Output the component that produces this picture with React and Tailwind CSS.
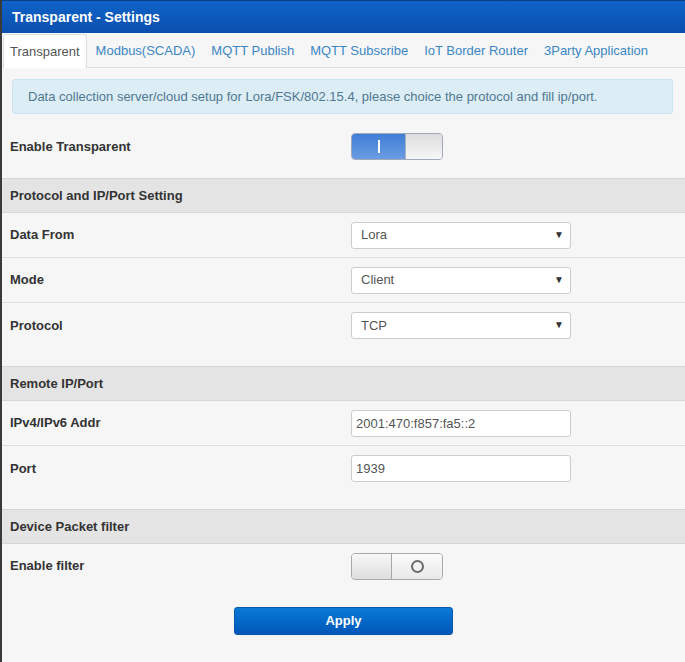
import React, { useState } from "react";

const tabs = [
  "Transparent",
  "Modbus(SCADA)",
  "MQTT Publish",
  "MQTT Subscribe",
  "IoT Border Router",
  "3Party Application",
];

const Toggle = ({ on, onClick }) => {
  if (on) {
    return (
      <button
        onClick={onClick}
        className="flex h-[27px] w-[92px] overflow-hidden rounded-[4px] border border-[#9fa9b8]"
      >
        <span className="flex h-full w-[53px] items-center justify-center bg-gradient-to-b from-[#3f7ed6] to-[#6a9ce3]">
          <span className="h-[13px] w-[2px] bg-white" />
        </span>
        <span className="h-full flex-1 border-l border-[#aab2bd] bg-gradient-to-b from-[#dcdcdc] to-[#f7f7f7]" />
      </button>
    );
  }
  return (
    <button
      onClick={onClick}
      className="flex h-[27px] w-[92px] overflow-hidden rounded-[4px] border border-[#a9a9a9]"
    >
      <span className="h-full w-[40px] border-r border-[#a9a9a9] bg-gradient-to-b from-[#f7f7f7] to-[#dedede]" />
      <span className="flex h-full flex-1 items-center justify-center bg-gradient-to-b from-[#fbfbfb] to-[#e9e9e9]">
        <span className="h-[13px] w-[13px] rounded-full border-2 border-[#6b6b6b]" />
      </span>
    </button>
  );
};

const Select = ({ value, options }) => (
  <div className="relative h-[27px] w-[220px]">
    <select
      defaultValue={value}
      className="h-full w-full appearance-none rounded-[3px] border border-[#cccccc] bg-white pl-[9px] text-[13px] text-[#555] outline-none"
    >
      {options.map((o) => (
        <option key={o}>{o}</option>
      ))}
    </select>
    <span className="pointer-events-none absolute right-[7px] top-[6px] text-[10px] leading-[14px] text-[#333]">
      ▼
    </span>
  </div>
);

const Input = ({ value }) => (
  <input
    defaultValue={value}
    className="h-[27px] w-[220px] rounded-[3px] border border-[#cccccc] bg-white px-[4px] text-[13px] text-[#555] outline-none"
  />
);

const Row = ({ label, children, border = true }) => (
  <div
    className={
      "flex h-[45px] items-center" + (border ? " border-b border-[#dddddd]" : "")
    }
  >
    <div className="w-[349px] pl-[8px] text-[13px] font-bold text-[#333]">
      {label}
    </div>
    {children}
  </div>
);

const Section = ({ title }) => (
  <div className="flex h-[35px] items-center border-y border-[#d6d6d6] bg-[#e4e4e4] pl-[8px] text-[13px] font-bold text-[#333]">
    {title}
  </div>
);

const App = () => {
  const [active, setActive] = useState(0);
  const [transparent, setTransparent] = useState(true);
  const [filter, setFilter] = useState(false);

  return (
    <div className="min-h-[662px] border-l-2 border-[#3a3a3a] bg-[#f6f6f6] font-['Liberation_Sans',Arial,sans-serif]">
      <div className="flex h-[33px] items-center border-t border-[#0b3f85] bg-gradient-to-b from-[#0f63c8] to-[#0a4fae] pl-[10px] text-[14px] font-bold text-white">
        Transparent - Settings
      </div>

      <div className="flex h-[35px] items-end border-b border-[#dddddd] bg-[#f6f6f6] pl-[1px]">
        {tabs.map((t, i) => (
          <button
            key={t}
            onClick={() => setActive(i)}
            className={
              i === active
                ? "mr-[2px] -mb-px flex h-[34px] items-center rounded-t-[3px] border border-b-0 border-[#dddddd] bg-white px-[6px] text-[13px] text-[#555]"
                : "mr-[2px] flex h-[33px] items-center border border-transparent px-[6px] text-[13px] text-[#3b86c4]"
            }
          >
            {t}
          </button>
        ))}
      </div>

      <div className="mt-[11px] mr-[12px] ml-[10px] flex h-[35px] items-center rounded-[3px] border border-[#c8e4f0] bg-[#dcedf6] pl-[15px] text-[13px] text-[#507890]">
        Data collection server/cloud setup for Lora/FSK/802.15.4, please choice
        the protocol and fill ip/port.
      </div>

      <div className="mt-[10px] flex items-center pt-[9px] pb-[18px]">
        <div className="w-[349px] pl-[8px] text-[13px] font-bold text-[#333]">
          Enable Transparent
        </div>
        <Toggle on={transparent} onClick={() => setTransparent(!transparent)} />
      </div>

      <Section title="Protocol and IP/Port Setting" />
      <Row label="Data From">
        <Select value="Lora" options={["Lora", "FSK", "802.15.4"]} />
      </Row>
      <Row label="Mode">
        <Select value="Client" options={["Client", "Server"]} />
      </Row>
      <div className="pb-[18px]">
        <Row label="Protocol" border={false}>
          <Select value="TCP" options={["TCP", "UDP"]} />
        </Row>
      </div>

      <Section title="Remote IP/Port" />
      <Row label="IPv4/IPv6 Addr">
        <Input value="2001:470:f857:fa5::2" />
      </Row>
      <div className="pb-[18px]">
        <Row label="Port" border={false}>
          <Input value="1939" />
        </Row>
      </div>

      <Section title="Device Packet filter" />
      <div className="flex items-center pt-[9px]">
        <div className="w-[349px] self-start pt-[3px] pl-[8px] text-[13px] font-bold text-[#333]">
          Enable filter
        </div>
        <Toggle on={filter} onClick={() => setFilter(!filter)} />
      </div>

      <div className="flex justify-center pt-[27px] pb-[26px]">
        <button className="h-[28px] w-[219px] rounded-[3px] border border-[#0757ad] bg-gradient-to-b from-[#0a7ad6] to-[#0257b8] text-[13px] font-bold text-white">
          Apply
        </button>
      </div>
    </div>
  );
};

export default App;
